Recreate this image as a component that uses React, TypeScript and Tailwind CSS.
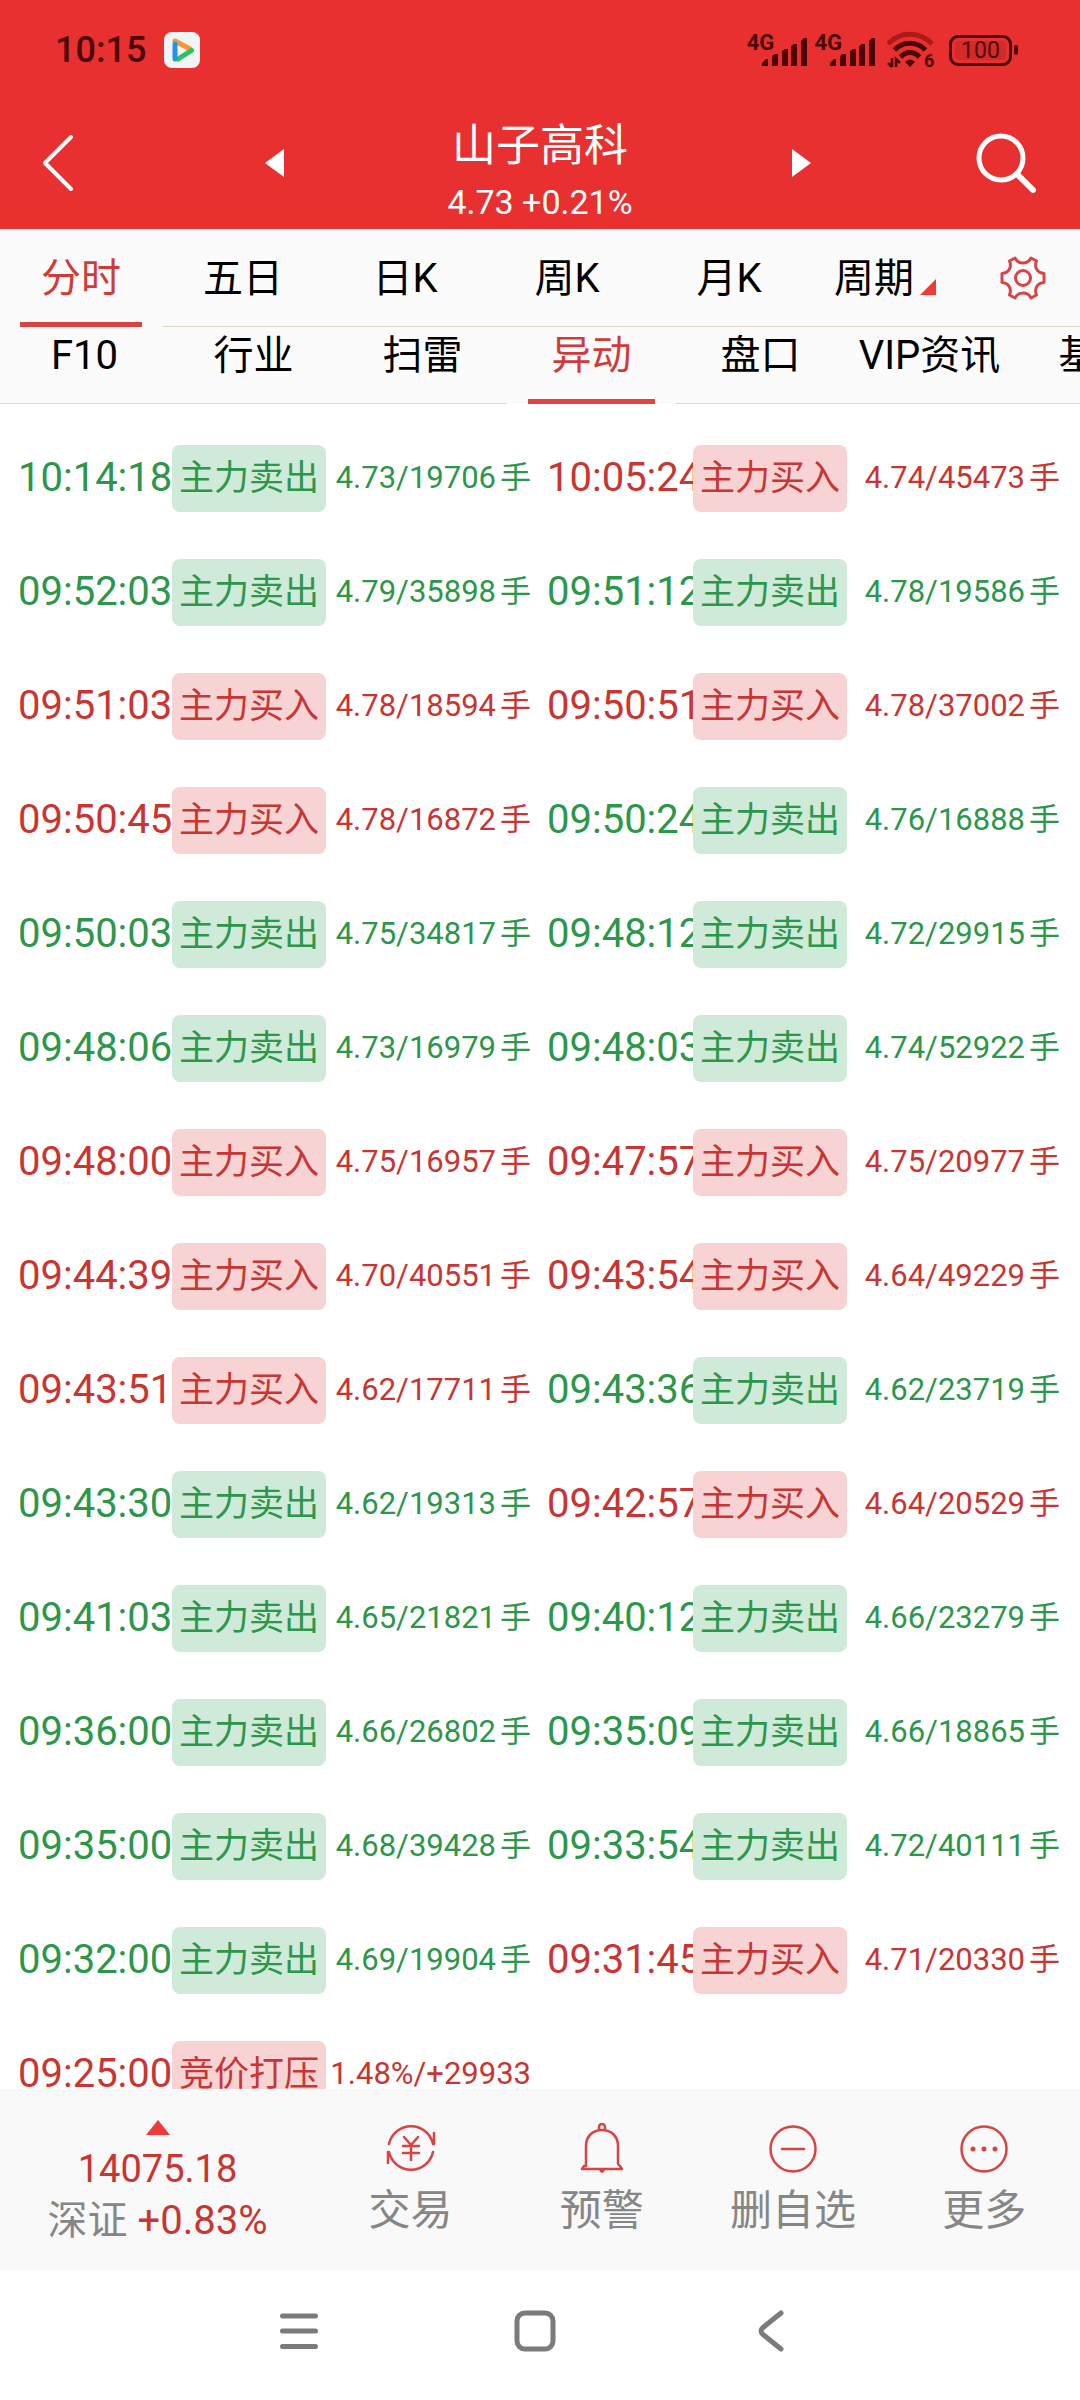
import React from 'react'

type Side = 'buy' | 'sell'
type Entry = { time: string; side: Side; label?: string; value: string; unit?: string }

const buy = (time: string, value: string): Entry => ({ time, side: 'buy', value, unit: '手' })
const sell = (time: string, value: string): Entry => ({ time, side: 'sell', value, unit: '手' })

const rows: Entry[][] = [
    [sell('10:14:18', '4.73/19706'), buy('10:05:24', '4.74/45473')],
    [sell('09:52:03', '4.79/35898'), sell('09:51:12', '4.78/19586')],
    [buy('09:51:03', '4.78/18594'), buy('09:50:51', '4.78/37002')],
    [buy('09:50:45', '4.78/16872'), sell('09:50:24', '4.76/16888')],
    [sell('09:50:03', '4.75/34817'), sell('09:48:12', '4.72/29915')],
    [sell('09:48:06', '4.73/16979'), sell('09:48:03', '4.74/52922')],
    [buy('09:48:00', '4.75/16957'), buy('09:47:57', '4.75/20977')],
    [buy('09:44:39', '4.70/40551'), buy('09:43:54', '4.64/49229')],
    [buy('09:43:51', '4.62/17711'), sell('09:43:36', '4.62/23719')],
    [sell('09:43:30', '4.62/19313'), buy('09:42:57', '4.64/20529')],
    [sell('09:41:03', '4.65/21821'), sell('09:40:12', '4.66/23279')],
    [sell('09:36:00', '4.66/26802'), sell('09:35:09', '4.66/18865')],
    [sell('09:35:00', '4.68/39428'), sell('09:33:54', '4.72/40111')],
    [sell('09:32:00', '4.69/19904'), buy('09:31:45', '4.71/20330')],
    [{ time: '09:25:00', side: 'buy', label: '竞价打压', value: '1.48%/+29933' }],
]

const chartTabs = ['分时', '五日', '日K', '周K', '月K']
const infoTabs = ['F10', '行业', '扫雷', '异动', '盘口', 'VIP资讯', '基金']

function Signal() {
    return (
        <div className="flex items-start">
            <span className="text-[22px] leading-[18px] font-bold">4G</span>
            <svg className="-ml-3 mt-1" width="45" height="28" viewBox="0 0 45 28" fill="currentColor">
                <path d="M0 28v-3l4-4h2v7zM10 28V18l3-2h3v12zM20 28V13l3-2h3v17zM29 28V8l3-2h3v22zM39 28V3l3-3h3v28z" />
            </svg>
        </div>
    )
}

function StatusBar() {
    return (
        <div className="h-[100px] pl-[55px] pr-[62px] flex items-center justify-between text-[#4a0606]">
            <div className="flex items-center gap-[18px]">
                <span className="text-[36px] leading-[44px] font-medium">10:15</span>
                <svg width="36" height="36" viewBox="0 0 36 36" fill="none" strokeWidth="5" strokeLinecap="round">
                    <rect width="36" height="36" rx="8" fill="#f3f4f6" />
                    <path d="M11 9L26 17" stroke="#f29a36" />
                    <path d="M27.500 18.500L14 27" stroke="#2fbf62" />
                    <path d="M11 12v15" stroke="#2196e8" />
                </svg>
            </div>
            <div className="flex items-center">
                <div className="flex gap-[7px]">
                    <Signal />
                    <Signal />
                </div>
                {/* wifi 6 */}
                <svg className="ml-3" width="50" height="38" viewBox="0 0 50 38" fill="none" stroke="currentColor" strokeWidth="5">
                    <path d="M1 13C13 0 33 0 45 13" stroke="#ab1b1b" />
                    <path d="M7.500 19C16 10 30 10 38.500 19" />
                    <path d="M13.500 26C19 20 27 20 32.500 26" />
                    <path d="M23 36l-5-5q5-5 10 0z" fill="currentColor" stroke="none" />
                    <path d="M5 27v9M5 36l-4-4M9 36v-8l4 4" strokeWidth="2.500" />
                    <text x="37" y="36" fontSize="18" fontWeight="700" fill="currentColor" stroke="none">6</text>
                </svg>
                <div className="ml-3 w-[63px] h-[31px] rounded-[9px] border-[3px] border-[#4a0606] p-[3px]">
                    <div className="h-full rounded bg-[#d42a2a] flex items-center justify-center text-[23px] leading-none">100</div>
                </div>
                <div className="ml-0.5 w-1 h-[10px] rounded-sm bg-[#4a0606]" />
            </div>
        </div>
    )
}

function Header() {
    return (
        <header className="bg-[#e83030] text-white">
            <StatusBar />
            <div className="h-[129px] pb-1.5 grid grid-cols-[164px_220px_1fr_212px_172px] items-center">
                <button type="button" aria-label="返回" className="pl-[42px]">
                    <svg width="32" height="58" viewBox="0 0 32 58" fill="none" stroke="currentColor" strokeWidth="4" strokeLinecap="round" strokeLinejoin="round">
                        <path d="M29 3L3 29l26 26" />
                    </svg>
                </button>
                <button type="button" aria-label="上一只" className="flex justify-center">
                    <svg width="20" height="28" viewBox="0 0 20 28" fill="currentColor">
                        <path d="M20 0v28L1 14z" />
                    </svg>
                </button>
                <div className="self-start pt-5 flex flex-col items-center">
                    <h1 className="text-[44px] leading-[52px]">山子高科</h1>
                    <p className="mt-1.5 text-[34px] leading-[48px]">4.73 +0.21%</p>
                </div>
                <button type="button" aria-label="下一只" className="flex justify-center">
                    <svg width="20" height="28" viewBox="0 0 20 28" fill="currentColor">
                        <path d="M0 0v28l19-14z" />
                    </svg>
                </button>
                <button type="button" aria-label="搜索" className="pr-[43px] flex justify-end">
                    <svg width="62" height="62" viewBox="0 0 62 62" fill="none" stroke="currentColor" strokeWidth="5">
                        <circle cx="26" cy="26" r="22" />
                        <path d="M42 42l16 16" strokeWidth="6" strokeLinecap="round" />
                    </svg>
                </button>
            </div>
        </header>
    )
}

function Tabs() {
    return (
        <nav className="bg-[#fbfbfc] text-black text-[40px] leading-[48px]">
            <div className="grid grid-cols-[repeat(6,3fr)_2fr] h-[98px]">
                {chartTabs.map((tab, i) => (
                    <button
                        key={tab}
                        type="button"
                        className={i === 0 ? 'px-5 text-[#d23a38]' : 'pt-0.5 border-b border-[#e0d8c4]'}
                    >
                        {i === 0 ? (
                            <span className="h-full pt-[7px] flex items-center justify-center border-b-[5px] border-[#d84444]">{tab}</span>
                        ) : (
                            tab
                        )}
                    </button>
                ))}
                <button type="button" className="pt-0.5 border-b border-[#e0d8c4] pr-3 flex items-center justify-center gap-1.5">
                    周期
                    <svg className="mt-4" width="16" height="16" viewBox="0 0 16 16" fill="#ee3a3a">
                        <path d="M16 0v16H0z" />
                    </svg>
                </button>
                <button type="button" aria-label="设置" className="border-b border-[#e0d8c4] pr-1.5 flex items-center justify-center">
                    <svg width="46" height="44" viewBox="-1 -1 46 44" fill="none" stroke="#d84444" strokeWidth="3" strokeLinejoin="round">
                        <path d="M14 1C16 5 19 6 22 6S28 5 30 1L35.500 4C33 10 36 16 43 16.500V25.500C36 26 33 32 35.500 38L30 41C28 37 25 36 22 36S16 37 14 41L8.500 38C11 32 8 26 1 25.500V16.500C8 16 11 10 8.500 4Z" />
                        <circle cx="22" cy="21" r="7.500" />
                    </svg>
                </button>
            </div>
            <div className="flex h-[77px] overflow-hidden">
                {infoTabs.map((tab) => (
                    <button
                        key={tab}
                        type="button"
                        className={
                            tab === '异动'
                                ? 'w-[169px] shrink-0 px-[21px] text-[#d23a38]'
                                : 'w-[169px] shrink-0 pb-[18px] whitespace-nowrap border-b border-[#e0d8c4]'
                        }
                    >
                        {tab === '异动' ? (
                            <span className="h-full pb-3.5 flex items-center justify-center border-b-[5px] border-[#e04444]">{tab}</span>
                        ) : (
                            tab
                        )}
                    </button>
                ))}
            </div>
        </nav>
    )
}

function Cells({ entry, left }: { entry: Entry; left: boolean }) {
    const isBuy = entry.side === 'buy'
    const color = isBuy ? 'text-[#c83532]' : 'text-[#2c964a]'
    return (
        <>
            <td className={`p-0 ${left ? 'pl-[18px]' : ''} ${color}`}>
                <div className="overflow-hidden whitespace-nowrap text-[40px] leading-[48px]">{entry.time}</div>
            </td>
            <td className={`p-0 ${color}`}>
                <div
                    className={`h-[67px] pt-0.5 rounded-lg flex items-center justify-center whitespace-nowrap text-[35px] leading-[48px] ${
                        isBuy ? 'bg-[#f7d3d3]' : 'bg-[#cfead8]'
                    }`}
                >
                    {entry.label ?? (isBuy ? '主力买入' : '主力卖出')}
                </div>
            </td>
            <td className={`p-0 ${left ? 'pr-4' : 'pr-2'} ${color}`}>
                <div className="flex justify-end gap-1 overflow-hidden whitespace-nowrap text-[31px] leading-[48px]">
                    <span>{entry.value}</span>
                    {entry.unit && <span>{entry.unit}</span>}
                </div>
            </td>
        </>
    )
}

function MoveTable() {
    return (
        <main className="flex-1 min-h-0 overflow-hidden bg-white pt-[17px] pr-3">
            <table className="w-full table-fixed border-collapse">
                <colgroup>
                    <col className="w-[172px]" />
                    <col className="w-[154px]" />
                    <col />
                    <col className="w-[146px]" />
                    <col className="w-[154px]" />
                    <col />
                </colgroup>
                <tbody>
                    {rows.map((row) => (
                        <tr key={row[0].time} className="h-[114px]">
                            {row.map((entry, i) => (
                                <Cells key={entry.time} entry={entry} left={i === 0} />
                            ))}
                        </tr>
                    ))}
                </tbody>
            </table>
        </main>
    )
}

function Action({ label, children }: { label: string; children: React.ReactNode }) {
    return (
        <button type="button" className="pt-[34px] flex flex-col items-center text-[#868686] text-[42px] leading-[56px]">
            <svg width="50" height="50" viewBox="0 0 50 50" fill="none" stroke="#d84444" strokeWidth="2.500" strokeLinecap="round" strokeLinejoin="round">
                {children}
            </svg>
            <span className="mt-2.5">{label}</span>
        </button>
    )
}

function BottomBar() {
    return (
        <footer className="h-[181px] bg-[#f9f9f9] grid grid-cols-[315px_repeat(4,1fr)] items-start">
            <div className="pt-[31px] flex flex-col items-center text-[#c83532] text-[38px] leading-[52px]">
                <svg width="24" height="15" viewBox="0 0 24 15" fill="#ee3a3a">
                    <path d="M12 0l12 15H0z" />
                </svg>
                <span className="mt-2">14075.18</span>
                <span className="text-[40px]">
                    <span className="text-[#868686]">深证</span> +0.83%
                </span>
            </div>
            <Action label="交易">
                <path d="M3 21A22.500 22.500 0 0 1 47 21M47 29A22.500 22.500 0 0 1 3 29M48 10v11l-4-7M2 40V29l4 7" />
                <path d="M18 14l7 8 7-8M25 22v15M17 23h16M17 30h16" />
            </Action>
            <Action label="预警">
                <path d="M9 43V23C9 13 16 7 25 7s16 6 16 16v17q0 2 2 3l2 3H5l2-3z" />
                <path d="M22 7V4q0-3 3-3t3 3v3" />
                <path d="M22 47h6q-1 3-3 3t-3-3z" fill="#d84444" stroke="none" />
            </Action>
            <Action label="删自选">
                <circle cx="25" cy="26" r="22.500" />
                <path d="M14 26h22" />
            </Action>
            <Action label="更多">
                <circle cx="25" cy="26" r="22.500" />
                <path d="M14 26h.01M25 26h.01M36 26h.01" strokeWidth="5" />
            </Action>
        </footer>
    )
}

function SystemNav() {
    return (
        <div className="h-[130px] bg-white pr-2.5 pb-2 flex items-center justify-center text-[#7b7b7b]">
            <button type="button" aria-label="最近任务" className="w-[236px] flex justify-center">
                <svg width="40" height="40" viewBox="0 0 40 40" fill="none" stroke="currentColor" strokeWidth="5" strokeLinecap="round">
                    <path d="M3.500 5h33M3.500 20h33M3.500 35.500h33" />
                </svg>
            </button>
            <button type="button" aria-label="主屏幕" className="w-[236px] flex justify-center">
                <svg width="42" height="42" viewBox="0 0 42 42" fill="none" stroke="currentColor" strokeWidth="5">
                    <rect x="3" y="3" width="36" height="36" rx="8" />
                </svg>
            </button>
            <button type="button" aria-label="返回上级" className="w-[236px] flex justify-center">
                <svg width="26" height="42" viewBox="0 0 26 42" fill="none" stroke="currentColor" strokeWidth="5" strokeLinecap="round" strokeLinejoin="round">
                    <path d="M23 3L5 17.500Q1 21 5 24.500L23 39" />
                </svg>
            </button>
        </div>
    )
}

export default function App() {
    return (
        <div className="h-screen w-full overflow-hidden flex flex-col bg-white font-['Roboto','Noto_Sans_CJK_SC',sans-serif]">
            <Header />
            <Tabs />
            <MoveTable />
            <BottomBar />
            <SystemNav />
        </div>
    )
}
